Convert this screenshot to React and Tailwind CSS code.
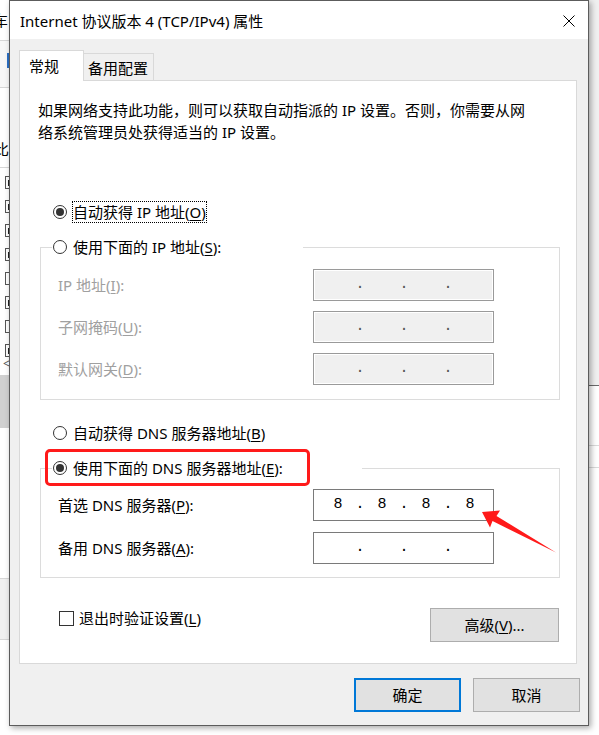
import React from "react";

const F = "font-[family-name:'Noto_Sans','Noto_Sans_CJK_SC',sans-serif]";

function Radio({ checked }) {
  return (
    <span className="w-[14px] h-[14px] rounded-full border border-[#333333] bg-white flex items-center justify-center shrink-0">
      {checked && <span className="w-[8px] h-[8px] rounded-full bg-[#333333]" />}
    </span>
  );
}

function U({ children }) {
  return <span className="underline underline-offset-2">{children}</span>;
}

function IpField({ disabled, values }) {
  const segs = values || ["", "", "", ""];
  return (
    <div
      className={
        disabled
          ? "w-[181px] h-[32px] border border-[#9a9a9a] bg-[#f0f0f0] shadow-[inset_0_0_0_1px_#ffffff] flex items-center pl-[2px] font-[family-name:'Liberation_Mono',monospace] text-[15px] text-[#555555]"
          : "w-[181px] h-[32px] border border-[#7a7a7a] bg-white flex items-center pl-[2px] font-[family-name:'Liberation_Mono',monospace] text-[15px] text-black"
      }
    >
      {segs.map((v, i) => (
        <React.Fragment key={i}>
          {i > 0 && (
            <span className="w-0 flex justify-center leading-[20px]">.</span>
          )}
          <span className="w-[44px] text-center leading-[20px]">{v}</span>
        </React.Fragment>
      ))}
    </div>
  );
}

function FieldRow({ label, disabled, values }) {
  return (
    <div className="h-[32px] flex items-center">
      <span
        className={
          disabled
            ? "w-[255px] text-[#a0a0a0] leading-[22px]"
            : "w-[255px] text-black leading-[22px]"
        }
      >
        {label}
      </span>
      <IpField disabled={disabled} values={values} />
    </div>
  );
}

export default function App() {
  const checks = [true, true, true, true, false, true, false, true];
  return (
    <div className={`relative w-[599px] h-[735px] overflow-hidden bg-white ${F} text-[15px] text-black`}>
      {/* background window, left strip */}
      <div className="absolute left-0 top-0 w-[12px] h-[735px] bg-white flex flex-col">
        <div className="h-[40px] flex items-center overflow-hidden">
          <span className="-ml-[7px] text-[15px] leading-[20px]">车</span>
        </div>
        <div className="h-px bg-[#d6d6d6]" />
        <div className="h-[46px] bg-[#f7f7f7] relative">
          <div className="absolute left-[7px] top-[12px] w-[3px] h-[15px] bg-[#2b6fc4]" />
        </div>
        <div className="h-px bg-[#d6d6d6]" />
        <div className="h-[79px] flex items-end pb-[8px] overflow-hidden">
          <span className="-ml-[6px] text-[15px] leading-[20px]">比</span>
        </div>
        <div className="h-px bg-[#d6d6d6]" />
        <div className="flex flex-col pt-[8px] gap-[11px] pl-[5px]">
          {checks.map((c, i) => (
            <div key={i} className="w-[12px] h-[13px] border border-[#555555] bg-white flex items-center pl-[2px]">
              {c && <span className="w-[3px] h-[6px] bg-[#222222]" />}
            </div>
          ))}
        </div>
        <div className="h-[14px] pl-[3px] text-[12px] leading-[14px] text-[#555555]">&lt;</div>
        <div className="h-[4px]" />
        <div className="h-[53px] bg-[#d0d0d0]" />
        <div className="h-[150px]" />
        <div className="h-px bg-[#d6d6d6]" />
        <div className="h-[60px] bg-[#f0f0f0]" />
        <div className="h-px bg-[#d6d6d6]" />
      </div>

      {/* background, right strip */}
      <div className="absolute left-[589px] top-0 w-[10px] h-[735px] flex flex-col bg-white">
        <div className="h-[385px] bg-[#f0f0f0]" />
        <div className="h-px bg-[#6a6a6a]" />
        <div className="h-[59px]" />
        <div className="h-px bg-[#dadada]" />
        <div className="h-[21px]" />
        <div className="h-px bg-[#dadada]" />
      </div>

      {/* dialog window */}
      <div className="absolute left-[9px] top-0 w-[580px] h-[726px] border border-[#5c5c5c] bg-[#f0f0f0] shadow-[2px_2px_6px_rgba(0,0,0,0.35)] flex flex-col">
        {/* title bar */}
        <div className="h-[38px] bg-white flex items-center justify-between pl-[10px] pr-[13px]">
          <span className="text-[15px] leading-[20px] pt-[2px]">Internet 协议版本 4 (TCP/IPv4) 属性</span>
          <svg width="12" height="12" viewBox="0 0 12 12" className="mt-[1px]">
            <line x1="0.5" y1="0.5" x2="11.5" y2="11.5" stroke="#000" strokeWidth="1" />
            <line x1="11.5" y1="0.5" x2="0.5" y2="11.5" stroke="#000" strokeWidth="1" />
          </svg>
        </div>

        {/* body */}
        <div className="flex-1 flex flex-col pt-[11px] pl-[9px]">
          {/* tabs */}
          <div className="flex items-end h-[30px]">
            <div className="relative z-10 h-[31px] -mb-px bg-white border-l border-t border-r border-[#d9d9d9] w-[65px] pl-[9px] pt-[4px] leading-[22px]">
              常规
            </div>
            <div className="h-[27px] bg-[#f0f0f0] border-t border-r border-[#d9d9d9] w-[70px] pl-[4px] pt-[3px] leading-[22px]">
              备用配置
            </div>
          </div>

          {/* panel */}
          <div className="w-[558px] h-[584px] bg-white border border-[#d9d9d9] flex flex-col">
            <div className="mt-[18px] pl-[18px] leading-[22px] whitespace-nowrap">
              <div>如果网络支持此功能，则可以获取自动指派的 IP 设置。否则，你需要从网</div>
              <div>络系统管理员处获得适当的 IP 设置。</div>
            </div>

            {/* radio 1 */}
            <div className="mt-[58px] ml-[33px] h-[22px] flex items-center gap-[6px]">
              <Radio checked />
              <span className="leading-[20px] outline outline-1 outline-dotted outline-black">
                自动获得 IP 地址(<U>O</U>)
              </span>
            </div>

            {/* group 1 */}
            <div className="relative mt-[24px] ml-[20px] w-[520px] border border-[#dcdcdc] pt-[21px] pl-[17px] pb-[14px] flex flex-col gap-[10px]">
              <div className="absolute left-[11px] -top-[12px] h-[22px] w-[251px] bg-white flex items-center gap-[6px] pl-[1px]">
                <Radio />
                <span className="leading-[20px]">使用下面的 IP 地址(<U>S</U>):</span>
              </div>
              <FieldRow disabled label={<>IP 地址(<U>I</U>):</>} />
              <FieldRow disabled label={<>子网掩码(<U>U</U>):</>} />
              <FieldRow disabled label={<>默认网关(<U>D</U>):</>} />
            </div>

            {/* dns radio 1 */}
            <div className="mt-[22px] ml-[33px] h-[22px] flex items-center gap-[6px]">
              <Radio />
              <span className="leading-[20px]">自动获得 DNS 服务器地址(<U>B</U>)</span>
            </div>

            {/* dns group */}
            <div className="relative mt-[24px] ml-[20px] w-[520px] border border-[#dcdcdc] pt-[20px] pl-[17px] pb-[13px] flex flex-col gap-[11px]">
              <div className="absolute left-[11px] -top-[12px] h-[22px] w-[310px] bg-white flex items-center gap-[6px] pl-[1px]">
                <Radio checked />
                <span className="leading-[20px]">使用下面的 DNS 服务器地址(<U>E</U>):</span>
              </div>
              <div className="absolute left-[4px] -top-[20px] w-[265px] h-[37px] border-[3px] border-[#ff1a1a] rounded-[5px] z-10" />
              <FieldRow label={<>首选 DNS 服务器(<U>P</U>):</>} values={["8", "8", "8", "8"]} />
              <FieldRow label={<>备用 DNS 服务器(<U>A</U>):</>} />
            </div>

            {/* checkbox + advanced */}
            <div className="mt-[29px] ml-[39px] w-[500px] flex items-start justify-between">
              <div className="h-[22px] flex items-center gap-[5px]">
                <span className="w-[15px] h-[15px] border border-[#333333] bg-white" />
                <span className="leading-[20px]">退出时验证设置(<U>L</U>)</span>
              </div>
              <div className="mt-px w-[129px] h-[34px] border border-[#adadad] bg-[#e1e1e1] flex items-center justify-center leading-[20px]">
                高级(<U>V</U>)...
              </div>
            </div>
          </div>

          {/* buttons */}
          <div className="mt-[14px] flex justify-end gap-[12px] pr-[8px]">
            <div className="w-[107px] h-[34px] border-2 border-[#0078d7] bg-[#e1e1e1] flex items-center justify-center leading-[20px]">
              确定
            </div>
            <div className="w-[107px] h-[34px] border border-[#adadad] bg-[#e1e1e1] flex items-center justify-center leading-[20px]">
              取消
            </div>
          </div>
        </div>
      </div>

      {/* annotation arrow */}
      <svg className="absolute left-0 top-0 pointer-events-none" width="599" height="735" viewBox="0 0 599 735">
        <polygon
          points="482,512 500,510.5 496.5,516 556,552.5 492.5,521 490,527.5"
          fill="#ff1a1a"
        />
      </svg>
    </div>
  );
}
